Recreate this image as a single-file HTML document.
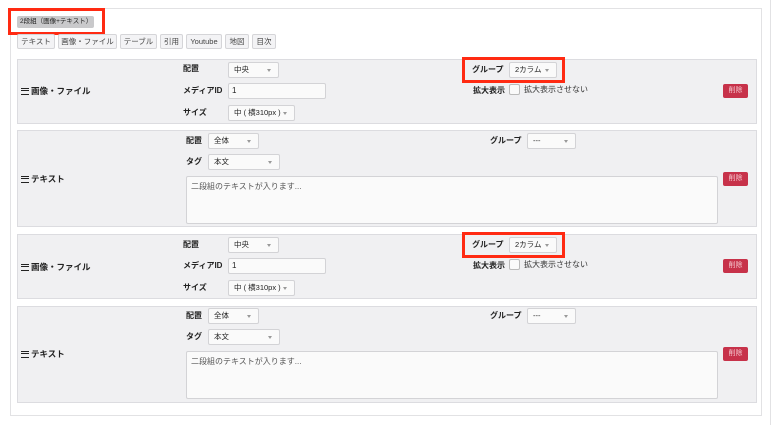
<!DOCTYPE html>
<html><head><meta charset="utf-8"><style>
*{box-sizing:border-box;margin:0;padding:0}
body{width:775px;height:425px;background:#fff;position:relative;overflow:hidden;font-family:"Liberation Sans","Noto Sans CJK JP",sans-serif;font-size:8px;color:#222}
.a{position:absolute;white-space:nowrap}
.outer{left:10px;top:8px;width:752px;height:408px;border:1px solid #e2e2e4;background:#fff}
.vline{left:770px;top:0;width:1px;height:425px;background:#e2e2e4}
.red{border:3px solid #ff2a12}
.tag{left:17px;top:16px;width:77px;height:12px;background:#c9c9cb;border-radius:2px;font-size:6.5px;line-height:12px;padding-left:3px;color:#222;overflow:hidden}
.btn{top:34px;height:15px;border:1px solid #d5d5d8;background:#f3f3f5;font-size:7.5px;line-height:13px;text-align:center;color:#444;border-radius:2px}
.panel{left:17px;width:740px;background:#f0f0f2;border:1px solid #dcdce0}
.lbl{font-weight:bold;font-size:8px;line-height:12px}
.sel{height:16px;background:#fafafa;border:1px solid #d3d3d6;border-radius:2px;font-size:7.5px;line-height:14px;padding-left:5px;color:#222}
.sel:after{content:"";position:absolute;right:7px;top:6px;border-left:2.5px solid transparent;border-right:2.5px solid transparent;border-top:3px solid #999}
.inp{height:16px;background:#fafafa;border:1px solid #d3d3d6;border-radius:2px;font-size:8px;line-height:14px;padding-left:3px}
.ta{height:48px;background:#fafafa;border:1px solid #d3d3d6;border-radius:2px;font-size:8px;padding:4px;color:#555}
.del{width:25px;height:14px;background:#c7324a;border-radius:2px;color:#f4c4cc;font-size:7px;line-height:14px;text-align:center}
.cb{width:11px;height:11px;background:#fafafa;border:1px solid #bbb;border-radius:2px}
.ham{font-weight:bold;font-size:8.5px;line-height:12px}
.ham b{display:inline-block;width:8px;height:7px;border-top:1.5px solid #222;border-bottom:1.5px solid #222;position:relative;margin-right:2px;vertical-align:-1px}
.ham b:after{content:"";position:absolute;left:0;right:0;top:1.3px;border-top:1.5px solid #222}
</style></head><body>
<div class="a vline"></div>
<div class="a outer"></div>
<div class="a red" style="left:8px;top:8px;width:97px;height:27px"></div>
<div class="a tag">2段組（画像+テキスト）</div>
<div class="a btn" style="left:17px;width:38px">テキスト</div>
<div class="a btn" style="left:58px;width:59px">画像・ファイル</div>
<div class="a btn" style="left:120px;width:37px">テーブル</div>
<div class="a btn" style="left:160px;width:23px">引用</div>
<div class="a btn" style="left:186px;width:36px">Youtube</div>
<div class="a btn" style="left:225px;width:24px">地図</div>
<div class="a btn" style="left:252px;width:24px">目次</div>

<div class="a panel" style="top:59px;height:65px"></div>
<div class="a panel" style="top:234px;height:65px"></div>
<div class="a panel" style="top:130px;height:97px"></div>
<div class="a panel" style="top:306px;height:97px"></div>

<div class="a ham" style="left:21px;top:85px"><b></b>画像・ファイル</div>
<div class="a lbl" style="left:183px;top:63px">配置</div>
<div class="a sel" style="left:228px;top:62px;width:51px">中央</div>
<div class="a lbl" style="left:183px;top:85px">メディアID</div>
<div class="a inp" style="left:228px;top:83px;width:98px">1</div>
<div class="a lbl" style="left:183px;top:107px">サイズ</div>
<div class="a sel" style="left:228px;top:105px;width:67px">中 ( 横310px )</div>
<div class="a red" style="left:462px;top:57px;width:103px;height:26px"></div>
<div class="a lbl" style="left:472px;top:64px">グループ</div>
<div class="a sel" style="left:509px;top:62px;width:48px">2カラム</div>
<div class="a lbl" style="left:473px;top:85px">拡大表示</div>
<div class="a cb" style="left:509px;top:84px"></div>
<div class="a" style="left:524px;top:84px;font-size:8px;line-height:12px;color:#333">拡大表示させない</div>
<div class="a del" style="left:723px;top:84px">削除</div>

<div class="a ham" style="left:21px;top:173px"><b></b>テキスト</div>
<div class="a lbl" style="left:186px;top:135px">配置</div>
<div class="a sel" style="left:208px;top:133px;width:51px">全体</div>
<div class="a lbl" style="left:186px;top:156px">タグ</div>
<div class="a sel" style="left:208px;top:154px;width:72px">本文</div>
<div class="a ta" style="left:186px;top:176px;width:532px">二段組のテキストが入ります...</div>
<div class="a lbl" style="left:490px;top:135px">グループ</div>
<div class="a sel" style="left:527px;top:133px;width:49px">---</div>
<div class="a del" style="left:723px;top:172px">削除</div>

<div class="a ham" style="left:21px;top:261px"><b></b>画像・ファイル</div>
<div class="a lbl" style="left:183px;top:239px">配置</div>
<div class="a sel" style="left:228px;top:237px;width:51px">中央</div>
<div class="a lbl" style="left:183px;top:260px">メディアID</div>
<div class="a inp" style="left:228px;top:258px;width:98px">1</div>
<div class="a lbl" style="left:183px;top:282px">サイズ</div>
<div class="a sel" style="left:228px;top:280px;width:67px">中 ( 横310px )</div>
<div class="a red" style="left:462px;top:232px;width:103px;height:26px"></div>
<div class="a lbl" style="left:472px;top:239px">グループ</div>
<div class="a sel" style="left:509px;top:237px;width:48px">2カラム</div>
<div class="a lbl" style="left:473px;top:260px">拡大表示</div>
<div class="a cb" style="left:509px;top:259px"></div>
<div class="a" style="left:524px;top:259px;font-size:8px;line-height:12px;color:#333">拡大表示させない</div>
<div class="a del" style="left:723px;top:259px">削除</div>

<div class="a ham" style="left:21px;top:348px"><b></b>テキスト</div>
<div class="a lbl" style="left:186px;top:310px">配置</div>
<div class="a sel" style="left:208px;top:308px;width:51px">全体</div>
<div class="a lbl" style="left:186px;top:331px">タグ</div>
<div class="a sel" style="left:208px;top:329px;width:72px">本文</div>
<div class="a ta" style="left:186px;top:351px;width:532px">二段組のテキストが入ります...</div>
<div class="a lbl" style="left:490px;top:310px">グループ</div>
<div class="a sel" style="left:527px;top:308px;width:49px">---</div>
<div class="a del" style="left:723px;top:347px">削除</div>
</body></html>
